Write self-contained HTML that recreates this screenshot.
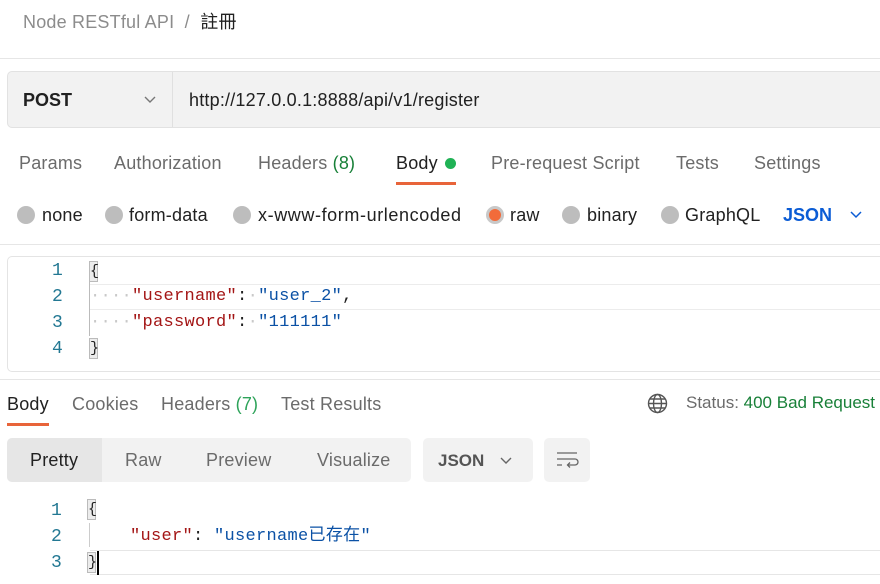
<!DOCTYPE html>
<html><head><meta charset="utf-8"><style>
*{margin:0;padding:0;box-sizing:border-box}
body{width:880px;height:584px;overflow:hidden;background:#fff;font-family:"Liberation Sans","Noto Sans CJK TC",sans-serif;color:#212121;position:relative}
.a{position:absolute;white-space:nowrap;line-height:20px}
.t,.r{font-size:18px;letter-spacing:0.2px;color:#6b6b6b}
.r{color:#212121}
.m{font-family:"Liberation Mono","Noto Sans CJK TC",monospace;font-size:17px;letter-spacing:0.3px}
.k{color:#a31515}.s{color:#0b51a5}.n{color:#237893;font-family:"Liberation Mono",monospace;font-size:18px}
.dot{position:absolute;width:18px;height:18px;border-radius:50%;background:#bdbdbd}
.hl{position:absolute;height:1px;background:#e6e6e6;left:0;right:0}
.br{position:absolute;width:9px;height:21px;background:#ececec;border:1px solid #bbb;font-family:"Liberation Mono",monospace;font-size:15px;line-height:19px;text-align:center;color:#222}
.w{color:#c8c8c8}
</style></head><body>
<div class="a" style="left:23px;top:12px;font-size:18px;letter-spacing:0.2px;color:#8c8c8c">Node RESTful API&nbsp; /&nbsp; <span style="color:#212121">註冊</span></div>
<div class="hl" style="top:58px"></div>
<div style="position:absolute;left:7px;top:71px;width:880px;height:57px;background:#f2f2f2;border:1px solid #e2e2e2;border-radius:5px"></div>
<div style="position:absolute;left:172px;top:72px;width:1px;height:55px;background:#e0e0e0"></div>
<div class="a" style="left:23px;top:90px;font-size:18px;font-weight:bold;color:#212121">POST</div>
<svg style="position:absolute;left:143px;top:94px" width="14" height="10"><path d="M2 3l5 5 5-5" fill="none" stroke="#777" stroke-width="1.4"/></svg>
<div class="a r" style="left:189px;top:90px">http://127.0.0.1:8888/api/v1/register</div>

<div class="a t" style="left:19px;top:153px">Params</div>
<div class="a t" style="left:114px;top:153px">Authorization</div>
<div class="a t" style="left:258px;top:153px">Headers <span style="color:#188038">(8)</span></div>
<div class="a t" style="left:396px;top:153px;color:#212121">Body</div>
<div class="dot" style="left:445px;top:158px;width:11px;height:11px;background:#1fb255"></div>
<div style="position:absolute;left:396px;top:182px;width:60px;height:3px;background:#e8643a"></div>
<div class="a t" style="left:491px;top:153px">Pre-request Script</div>
<div class="a t" style="left:676px;top:153px">Tests</div>
<div class="a t" style="left:754px;top:153px">Settings</div>

<div class="dot" style="left:17px;top:206px"></div><div class="a r" style="left:42px;top:205px">none</div>
<div class="dot" style="left:105px;top:206px"></div><div class="a r" style="left:129px;top:205px">form-data</div>
<div class="dot" style="left:233px;top:206px"></div><div class="a r" style="left:258px;top:205px;letter-spacing:0.6px">x-www-form-urlencoded</div>
<div class="dot" style="left:486px;top:206px;background:#f26b3a;border:3px solid #c8c8c8"></div><div class="a r" style="left:510px;top:205px">raw</div>
<div class="dot" style="left:562px;top:206px"></div><div class="a r" style="left:587px;top:205px">binary</div>
<div class="dot" style="left:661px;top:206px"></div><div class="a r" style="left:685px;top:205px">GraphQL</div>
<div class="a" style="left:783px;top:205px;font-size:18px;font-weight:bold;color:#0b5cd5">JSON</div>
<svg style="position:absolute;left:849px;top:209px" width="14" height="10"><path d="M2 3l5 5 5-5" fill="none" stroke="#0b5cd5" stroke-width="1.5"/></svg>
<div class="hl" style="top:244px"></div>

<div style="position:absolute;left:7px;top:256px;width:880px;height:116px;border:1px solid #e4e4e4;border-radius:5px"></div>
<div style="position:absolute;left:90px;top:284px;width:790px;height:1px;background:#ececec"></div>
<div style="position:absolute;left:90px;top:309px;width:790px;height:1px;background:#ececec"></div>
<div style="position:absolute;left:89px;top:282px;width:1px;height:54px;background:#bbb"></div>
<div class="a n" style="left:52px;top:261px">1</div>
<div class="a n" style="left:52px;top:287px">2</div>
<div class="a n" style="left:52px;top:313px">3</div>
<div class="a n" style="left:52px;top:339px">4</div>
<div class="br" style="left:89px;top:261px">{</div>
<div class="br" style="left:89px;top:338px">}</div>
<div class="a m" style="left:90px;top:287px"><span class="w">····</span><span class="k">"username"</span>:<span class="w">·</span><span class="s">"user_2"</span>,</div>
<div class="a m" style="left:90px;top:313px"><span class="w">····</span><span class="k">"password"</span>:<span class="w">·</span><span class="s">"111111"</span></div>
<div class="hl" style="top:379px"></div>

<div class="a t" style="left:7px;top:394px;color:#212121">Body</div>
<div style="position:absolute;left:7px;top:423px;width:42px;height:3px;background:#e8643a"></div>
<div class="a t" style="left:72px;top:394px">Cookies</div>
<div class="a t" style="left:161px;top:394px">Headers <span style="color:#2ea35a">(7)</span></div>
<div class="a t" style="left:281px;top:394px">Test Results</div>
<svg style="position:absolute;left:647px;top:393px" width="21" height="21" fill="none" stroke="#555" stroke-width="1.4"><circle cx="10.5" cy="10.5" r="9"/><ellipse cx="10.5" cy="10.5" rx="4" ry="9"/><path d="M1.5 10.5h18M3 6h15M3 15h15"/></svg>
<div class="a t" style="left:686px;top:393px;font-size:17px;letter-spacing:0">Status: <span style="color:#188038">400 Bad Request</span></div>

<div style="position:absolute;left:7px;top:438px;width:404px;height:44px;background:#f2f2f2;border-radius:5px"></div>
<div style="position:absolute;left:7px;top:438px;width:95px;height:44px;background:#e6e6e6;border-radius:5px 0 0 5px"></div>
<div class="a r" style="left:30px;top:450px">Pretty</div>
<div class="a t" style="left:125px;top:450px">Raw</div>
<div class="a t" style="left:206px;top:450px">Preview</div>
<div class="a t" style="left:317px;top:450px">Visualize</div>
<div style="position:absolute;left:423px;top:438px;width:110px;height:44px;background:#f2f2f2;border-radius:5px"></div>
<div class="a" style="left:438px;top:451px;font-size:17px;font-weight:bold;color:#555">JSON</div>
<svg style="position:absolute;left:499px;top:455px" width="14" height="10"><path d="M2 3l5 5 5-5" fill="none" stroke="#666" stroke-width="1.4"/></svg>
<div style="position:absolute;left:544px;top:438px;width:46px;height:44px;background:#f2f2f2;border-radius:5px"></div>
<svg style="position:absolute;left:555px;top:450px" width="24" height="20" fill="none" stroke="#666" stroke-width="1.3"><path d="M2 3h20M2 9h18a3 3 0 010 6h-7M15 12.5l-2.5 2.5 2.5 2.5M2 15h5"/></svg>

<div style="position:absolute;left:89px;top:523px;width:1px;height:24px;background:#ccc"></div>
<div style="position:absolute;left:90px;top:550px;width:790px;height:1px;background:#e6e6e6"></div>
<div style="position:absolute;left:90px;top:574px;width:790px;height:1px;background:#e6e6e6"></div>
<div class="a n" style="left:51px;top:501px">1</div>
<div class="a n" style="left:51px;top:527px">2</div>
<div class="a n" style="left:51px;top:553px">3</div>
<div class="br" style="left:87px;top:499px">{</div>
<div class="br" style="left:87px;top:552px">}</div>
<div style="position:absolute;left:97px;top:551px;width:2px;height:24px;background:#000"></div>
<div class="a m" style="left:130px;top:527px"><span class="k">"user"</span>: <span class="s">"username已存在"</span></div>
</body></html>
